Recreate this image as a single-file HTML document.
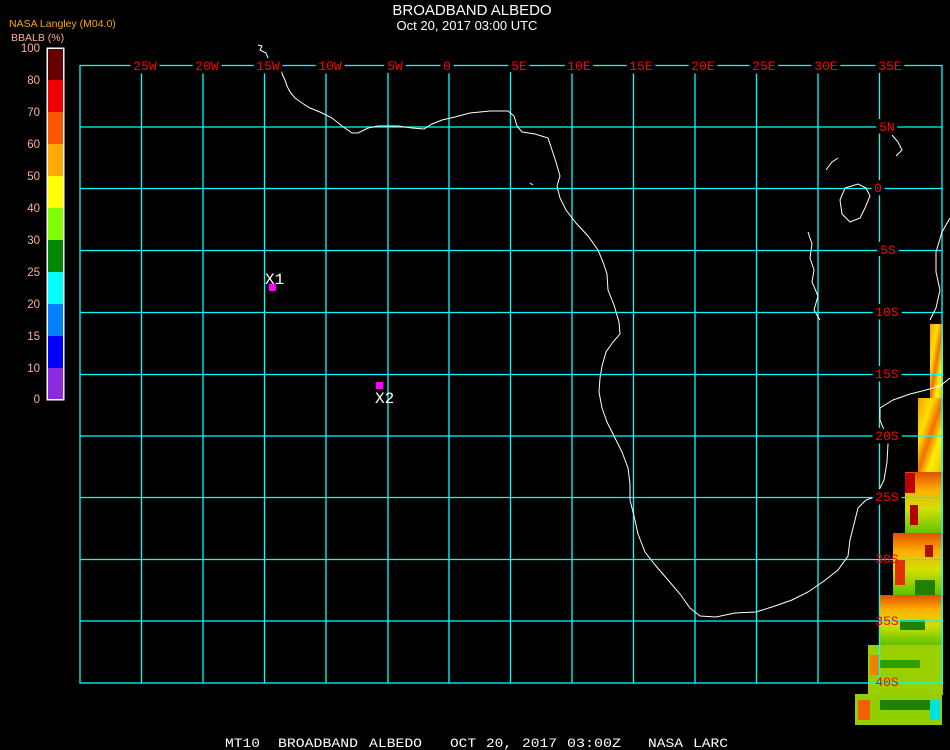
<!DOCTYPE html>
<html><head><meta charset="utf-8"><style>
html,body{margin:0;padding:0;background:#000;width:950px;height:750px;overflow:hidden}
svg{display:block}
</style></head><body>
<svg width="950" height="750" viewBox="0 0 950 750" xmlns="http://www.w3.org/2000/svg" font-family="Liberation Sans, sans-serif">
<rect width="950" height="750" fill="#000"/>
<defs>
<linearGradient id="g1" x1="0" y1="0" x2="1" y2="1">
<stop offset="0" stop-color="#f5a000"/><stop offset="0.3" stop-color="#ffe000"/><stop offset="0.5" stop-color="#f07000"/><stop offset="0.7" stop-color="#ffee00"/><stop offset="1" stop-color="#e8c000"/>
</linearGradient>
<linearGradient id="g2" x1="0" y1="0" x2="0" y2="1">
<stop offset="0" stop-color="#e05000"/><stop offset="0.3" stop-color="#ffb000"/><stop offset="0.6" stop-color="#d0e000"/><stop offset="1" stop-color="#60c000"/>
</linearGradient>
</defs>
<g>
<rect x="930" y="324" width="13" height="76" fill="url(#g1)"/>
<rect x="918" y="398" width="25" height="74" fill="url(#g1)"/>
<rect x="905" y="472" width="38" height="62" fill="url(#g2)"/>
<rect x="893" y="533" width="50" height="62" fill="url(#g2)"/>
<rect x="880" y="595" width="63" height="50" fill="url(#g2)"/>
<rect x="868" y="645" width="75" height="50" fill="#9ad000"/>
<rect x="855" y="694" width="87" height="31" fill="#90d000"/>
<rect x="905" y="473" width="10" height="20" fill="#c00000"/>
<rect x="910" y="505" width="8" height="20" fill="#b00000"/>
<rect x="925" y="545" width="8" height="12" fill="#b01000"/>
<rect x="895" y="560" width="10" height="25" fill="#e03000"/>
<rect x="915" y="580" width="20" height="15" fill="#208000"/>
<rect x="900" y="620" width="25" height="10" fill="#208000"/>
<rect x="880" y="660" width="40" height="8" fill="#30a000"/>
<rect x="880" y="700" width="50" height="10" fill="#208000"/>
<rect x="930" y="700" width="10" height="20" fill="#00e0e0"/>
<rect x="870" y="655" width="10" height="20" fill="#f08000"/>
<rect x="858" y="700" width="12" height="20" fill="#f06000"/>
</g>
<g stroke="#00ffff" stroke-width="1.3" fill="none">
<rect x="80" y="65.5" width="862" height="617.5"/>
<path d="M141.5 65V683M203 65V683M264.5 65V683M326 65V683M388 65V683M449 65V683M510.5 65V683M572 65V683M633.5 65V683M695 65V683M756.5 65V683M818 65V683M879.5 65V683"/>
<path d="M80 127H942M80 188.5H942M80 250.5H942M80 312.5H942M80 374.5H942M80 436H942M80 497.5H942M80 559.5H942M80 621H942"/>
</g>
<g stroke="#fff" stroke-width="1" fill="none">
<path d="M258 45 L262 46 L260 50 L266 53 L268 58 L272 60 L275 68 L281 70 L283 76 L285 80 L287 86 L290 92 L295 98 L302 103 L310 108 L320 112 L332 118 L342 126 L352 133 L358 133 L368 128 L378 126 L398 126 L412 128 L424 129 L432 124 L442 120 L455 117 L470 113 L490 111 L508 111 L514 116 L517 126 L522 132 L535 134 L548 138 L552 150 L556 162 L560 176 L557 186 L560 198 L566 210 L576 223 L588 236 L598 250 L603 262 L607 274 L608 290 L614 305 L619 322 L620 334 L613 342 L606 352 L602 366 L600 378 L599 392 L602 408 L607 422 L614 436 L622 452 L628 468 L630 484 L630 500 L634 516 L638 534 L645 552 L656 566 L668 580 L680 594 L690 608 L700 616 L716 617 L735 613 L756 612 L775 606 L792 600 L808 592 L824 581 L838 570 L848 556 L850 540 L854 524 L858 508 L866 500"/>
<path d="M866 500 L872 498 L878 492 L884 480 L887 462 L888 444 L884 430 L880 420 L880 408 L893 400 L910 394 L926 390 L940 386 L950 378"/>
<path d="M950 218 L942 232 L936 252 L936 272 L940 290 L936 308 L930 320"/>
<path d="M808 232 L812 244 L810 258 L814 270 L812 282 L818 296 L814 310 L820 320"/>
<path d="M845 188 L858 184 L866 188 L870 196 L865 208 L860 218 L850 222 L842 214 L840 200 Z"/>
<path d="M826 170 L832 162 L838 158"/>
<path d="M892 135 L898 142 L902 150 L896 156"/>
<path d="M530 183 L533 185"/>
</g>
<g fill="#ff0000" font-size="13" font-family="Liberation Mono, monospace" text-anchor="middle" stroke="#000" stroke-width="7" paint-order="stroke" stroke-linejoin="miter">
<text x="145" y="70">25W</text><text x="207" y="70">20W</text><text x="268" y="70">15W</text><text x="330" y="70">10W</text><text x="395" y="70">5W</text><text x="447" y="70">0</text><text x="519" y="70">5E</text><text x="579" y="70">10E</text><text x="641" y="70">15E</text><text x="703" y="70">20E</text><text x="764" y="70">25E</text><text x="826" y="70">30E</text><text x="890" y="70">35E</text>
<text x="887" y="131">5N</text><text x="878" y="192">0</text><text x="888" y="254">5S</text><text x="887" y="316">10S</text><text x="887" y="378">15S</text><text x="887" y="440">20S</text><text x="887" y="501">25S</text>
</g>
<g fill="#ff0000" font-size="13" font-family="Liberation Mono, monospace" text-anchor="middle">
<text x="887" y="563">30S</text><text x="887" y="625">35S</text><text x="887" y="686">40S</text>
</g>
<rect x="269" y="284" width="7" height="7" fill="#ff00ff"/>
<rect x="376" y="382" width="7" height="7" fill="#ff00ff"/>
<g fill="#fff" font-size="16" font-family="Liberation Mono, monospace">
<text x="265" y="284">X1</text><text x="375" y="403">X2</text>
</g>
<text x="472" y="15" fill="#fff" font-size="15" text-anchor="middle">BROADBAND ALBEDO</text>
<text x="467" y="30" fill="#fff" font-size="13" text-anchor="middle">Oct 20, 2017 03:00 UTC</text>
<text x="9" y="27" fill="#ffa500" font-size="10.5">NASA Langley (M04.0)</text>
<text x="11" y="41" fill="#ffb090" font-size="10.5">BBALB (%)</text>
<rect x="46.5" y="47.5" width="18" height="353" fill="#fff"/>
<rect x="48" y="49" width="15" height="31" fill="#660000"/>
<rect x="48" y="80" width="15" height="32" fill="#f00000"/>
<rect x="48" y="112" width="15" height="32" fill="#ff5500"/>
<rect x="48" y="144" width="15" height="32" fill="#ffaa00"/>
<rect x="48" y="176" width="15" height="32" fill="#ffff00"/>
<rect x="48" y="208" width="15" height="32" fill="#80ff00"/>
<rect x="48" y="240" width="15" height="32" fill="#008800"/>
<rect x="48" y="272" width="15" height="32" fill="#00ffff"/>
<rect x="48" y="304" width="15" height="32" fill="#0080ff"/>
<rect x="48" y="336" width="15" height="32" fill="#0000ff"/>
<rect x="48" y="368" width="15" height="31" fill="#8a2be2"/>
<g fill="#ffb090" font-size="11.5" text-anchor="end">
<text x="40" y="52">100</text><text x="40" y="84">80</text><text x="40" y="116">70</text><text x="40" y="148">60</text><text x="40" y="180">50</text><text x="40" y="212">40</text><text x="40" y="244">30</text><text x="40" y="276">25</text><text x="40" y="308">20</text><text x="40" y="340">15</text><text x="40" y="372">10</text><text x="40" y="403">0</text>
</g>
<g fill="#fff" font-size="13" font-family="Liberation Mono, monospace" lengthAdjust="spacingAndGlyphs">
<text x="225" y="747" textLength="35" lengthAdjust="spacingAndGlyphs">MT10</text>
<text x="278" y="747" textLength="80" lengthAdjust="spacingAndGlyphs">BROADBAND</text>
<text x="369" y="747" textLength="53" lengthAdjust="spacingAndGlyphs">ALBEDO</text>
<text x="450" y="747" textLength="26" lengthAdjust="spacingAndGlyphs">OCT</text>
<text x="486" y="747" textLength="26" lengthAdjust="spacingAndGlyphs">20,</text>
<text x="522" y="747" textLength="35" lengthAdjust="spacingAndGlyphs">2017</text>
<text x="567" y="747" textLength="54" lengthAdjust="spacingAndGlyphs">03:00Z</text>
<text x="648" y="747" textLength="35" lengthAdjust="spacingAndGlyphs">NASA</text>
<text x="693" y="747" textLength="35" lengthAdjust="spacingAndGlyphs">LARC</text>
</g>
</svg>
</body></html>
